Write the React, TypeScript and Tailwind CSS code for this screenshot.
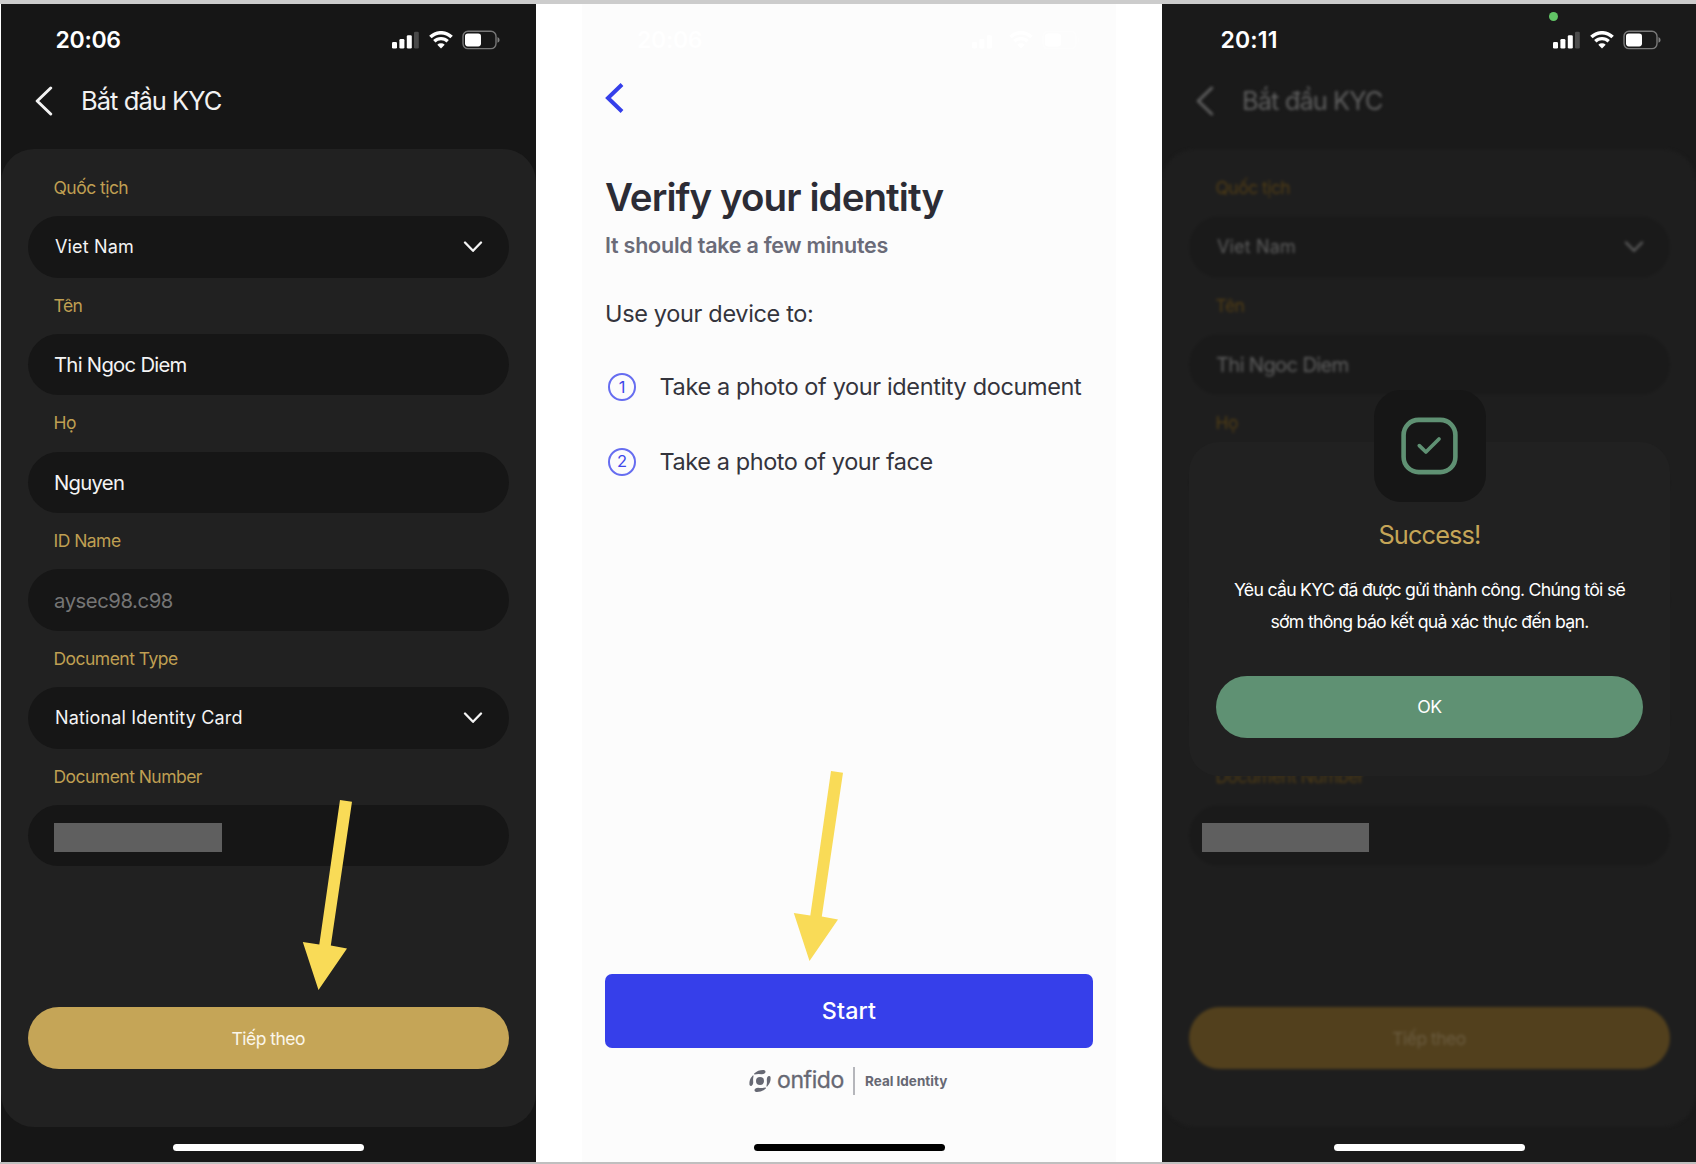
import React from "react";

function StatusBar({ time, timeClass, padClass }: { time: string; timeClass: string; padClass: string }) {
  return (
    <div className={`flex h-[72px] shrink-0 items-center text-white ${padClass}`}>
      <span className={`text-[23px] leading-none font-semibold ${timeClass}`}>{time}</span>
      <svg className="ml-auto h-[18px] w-[27px]" viewBox="0 0 27 18" fill="currentColor">
        <rect x="0" y="11" width="5" height="6.5" rx="1.3" />
        <rect x="7.4" y="8" width="5" height="9.5" rx="1.3" />
        <rect x="14.8" y="4.3" width="5" height="13.2" rx="1.3" />
        <rect x="22" y="0.7" width="4.8" height="16.8" rx="1.3" opacity="0.22" />
      </svg>
      <svg className="ml-[10px] h-[18px] w-[24px]" viewBox="0 0 24 18" fill="none" stroke="currentColor">
        <path d="M1.4 6.1 A15 15 0 0 1 22.6 6.1" strokeWidth="3.5" />
        <path d="M5.3 10.3 A9.6 9.6 0 0 1 18.7 10.3" strokeWidth="3.3" />
        <path d="M8.3 13.8 A5.4 5.4 0 0 1 15.7 13.8 L12 17.6 Z" fill="currentColor" stroke="none" />
      </svg>
      <svg className="ml-[9px] h-[20px] w-[38px]" viewBox="0 0 38 20">
        <rect x="1" y="1.2" width="33" height="17.4" rx="5" fill="none" stroke="currentColor" strokeWidth="1.4" opacity="0.42" />
        <rect x="3" y="3.4" width="16" height="13" rx="2.8" fill="currentColor" />
        <path d="M35.5 7 Q37.6 8 37.6 9.9 Q37.6 11.8 35.5 12.8 Z" fill="currentColor" opacity="0.45" />
      </svg>
    </div>
  );
}

type Tone = {
  card: string;
  field: string;
  label: string;
  value: string;
  muted: string;
  button: string;
  title: string;
};

const brightTone: Tone = {
  card: "bg-[#212121] pl-[26.5px] pr-[27px]",
  field: "bg-[#161616] pl-[26.5px]",
  label: "text-[#bf9f52] pl-[26px]",
  value: "text-[#f4f4f4]",
  muted: "text-[#757575]",
  button: "bg-[#c5a557] text-[#fbf6ea]",
  title: "text-[#f2f2f2]",
};

const dimTone: Tone = {
  card: "bg-[#1e1e1e] px-[26.5px]",
  field: "bg-[#1a1a1a] pl-[27.5px]",
  label: "text-[#513d15] pl-[27px]",
  value: "text-[#5e5e5e]",
  muted: "text-[#303030]",
  button: "bg-[#52401d] text-[#6b5c40]",
  title: "text-[#5f5f5f]",
};

type Field = { label: string; value: string; kind: "select" | "input" | "muted" | "redacted" | "empty" };

const fields: Field[] = [
  { label: "Quốc tịch", value: "Viet Nam", kind: "select" },
  { label: "Tên", value: "Thi Ngoc Diem", kind: "input" },
  { label: "Họ", value: "Nguyen", kind: "input" },
  { label: "ID Name", value: "aysec98.c98", kind: "muted" },
  { label: "Document Type", value: "National Identity Card", kind: "select" },
  { label: "Document Number", value: "", kind: "redacted" },
];

// Rows behind the success dialog carry no content of their own.
const fieldsBehindDialog: Field[] = [
  fields[0],
  fields[1],
  { label: "Họ", value: "", kind: "empty" },
  { label: "", value: "", kind: "empty" },
  { label: "", value: "", kind: "empty" },
  { label: "Document Number", value: "", kind: "empty" },
];

function KycForm({ tone, rows }: { tone: Tone; rows: Field[] }) {
  return (
    <>
      <div className={`flex h-[48px] shrink-0 items-center pt-px pl-[34px] ${tone.title}`}>
        <svg className="h-[30px] w-[18px]" viewBox="0 0 18 30" fill="none" stroke="currentColor" strokeWidth="3" strokeLinecap="round" strokeLinejoin="round">
          <path d="M15.7 2 L2.2 15 L15.7 28" />
        </svg>
        <h1 className="ml-[28px] text-[25.5px] leading-none tracking-[-0.95px]">Bắt đầu KYC</h1>
      </div>
      <div className={`mt-[25px] flex h-[978px] shrink-0 flex-col rounded-[33px] pt-[10.75px] ${tone.card}`}>
        {rows.map((f, i) => (
          <div key={i}>
            <div className={`flex h-[56.25px] items-center text-[17.5px] tracking-[-0.53px] ${tone.label}`}>{f.label}</div>
            <div className={`flex h-[61.5px] items-center rounded-full pr-[26px] ${tone.field}`}>
              {f.kind === "select" && (
                <>
                  <span className={`pl-[1px] text-[18px] tracking-[0.15px] ${tone.value}`}>{f.value}</span>
                  <svg className={`ml-auto h-[12px] w-[20px] ${tone.value}`} viewBox="0 0 20 12" fill="none" stroke="currentColor" strokeWidth="2.3" strokeLinecap="round" strokeLinejoin="round">
                    <path d="M2 1.5 L10 9.8 L18 1.5" />
                  </svg>
                </>
              )}
              {f.kind === "input" && <span className={`pt-px text-[20.3px] tracking-[-0.72px] ${tone.value}`}>{f.value}</span>}
              {f.kind === "muted" && <span className={`pt-[2px] text-[20.3px] tracking-[-0.45px] ${tone.muted}`}>{f.value}</span>}
              {f.kind === "redacted" && <span className="mt-[3px] h-[29px] w-[168px] bg-[#5f5f5f]" />}
            </div>
          </div>
        ))}
        <div className={`mt-[140.8px] flex h-[62px] items-center justify-center rounded-full pt-[2px] text-[17.5px] tracking-[-0.5px] ${tone.button}`}>Tiếp theo</div>
      </div>
    </>
  );
}

function HomeBar({ color }: { color: string }) {
  return <div className={`mx-auto mt-auto mb-[11px] h-[7px] w-[191px] shrink-0 rounded-full ${color}`} />;
}

function Arrow({ place }: { place: string }) {
  return (
    <svg className={`absolute h-[192px] w-[52px] ${place}`} viewBox="0 0 52 192" fill="#f9db57">
      <path d="M38 0 L50 1.7 L28.8 145.6 L45 148.6 L16.5 190 L0.8 142 L17.3 144.4 Z" />
    </svg>
  );
}

function OnfidoMark() {
  return (
    <svg className="h-[24px] w-[24px]" viewBox="0 0 24 24" fill="currentColor">
      <circle cx="12" cy="12" r="4" />
      <path d="M6.2 4.4 Q10.5 0.6 16 1 Q18 1.6 17.4 3.4 Q16.6 5 14 5.2 Q9.5 4.6 6.6 5.4 Q5.6 5.2 6.2 4.4 Z" />
      <path d="M6.2 4.4 Q10.5 0.6 16 1 Q18 1.6 17.4 3.4 Q16.6 5 14 5.2 Q9.5 4.6 6.6 5.4 Q5.6 5.2 6.2 4.4 Z" transform="rotate(180 12 12)" />
      <path d="M6.6 4.8 Q10.5 1 15.6 1.4 Q17.4 1.8 16.9 3.4 Q16.2 5 14 5.2 Q9.5 4.8 6.9 5.5 Q6 5.4 6.6 4.8 Z" transform="translate(24 0) scale(-1 1) rotate(270 12 12)" />
      <path d="M6.6 4.8 Q10.5 1 15.6 1.4 Q17.4 1.8 16.9 3.4 Q16.2 5 14 5.2 Q9.5 4.8 6.9 5.5 Q6 5.4 6.6 4.8 Z" transform="translate(24 0) scale(-1 1) rotate(90 12 12)" />
    </svg>
  );
}

function Step({ n, text, textClass }: { n: number; text: string; textClass: string }) {
  return (
    <li className="flex h-[74.8px] items-center">
      <span className="ml-[3px] flex h-[28px] w-[28px] shrink-0 items-center justify-center rounded-full border-2 border-[#666df0] text-[16.5px] text-[#4048ea]">{n}</span>
      <span className={`ml-[23.5px] text-[23.5px] whitespace-nowrap text-[#34343c] ${textClass}`}>{text}</span>
    </li>
  );
}

export default function App() {
  return (
    <div className="flex h-[1164px] w-[1696px] flex-col overflow-hidden bg-white font-['Inter','Liberation_Sans',sans-serif]">
      <div className="h-[4px] shrink-0 bg-[#cccccc]" />
      <main className="flex h-[1158px] pl-px">
        <section className="relative flex w-[535px] shrink-0 flex-col bg-[#161616]">
          <StatusBar time="20:06" timeClass="pl-[54.5px] tracking-[-0.3px]" padClass="pr-[36px]" />
          <KycForm tone={brightTone} rows={fields} />
          <HomeBar color="bg-white" />
          <Arrow place="left-[301px] top-[796px]" />
        </section>

        <section className="relative ml-[46px] flex w-[534px] shrink-0 flex-col bg-[#fcfcfc]">
          <StatusBar time="20:06" timeClass="pl-[55px] tracking-[-0.3px]" padClass="pr-[36px]" />
          <svg className="mt-[6px] ml-[22px] h-[32px] w-[22px] shrink-0" viewBox="0 0 22 32" fill="none" stroke="#353fea" strokeWidth="4">
            <path d="M18 2.5 L4 16 L18 29.5" />
          </svg>
          <div className="flex grow flex-col px-[23px]">
            <h2 className="mt-[54.5px] text-[38.5px] leading-[56px] font-semibold tracking-[-0.93px] whitespace-nowrap text-[#2c2c35]">Verify your identity</h2>
            <p className="mt-[4px] text-[21.5px] leading-[32px] font-semibold tracking-[-0.23px] whitespace-nowrap text-[#6a6b78]">It should take a few minutes</p>
            <p className="mt-[37.5px] text-[23.5px] leading-[32px] tracking-[-0.34px] whitespace-nowrap text-[#34343c]">Use your device to:</p>
            <ol className="mt-[19.5px]">
              <Step n={1} text="Take a photo of your identity document" textClass="tracking-[-0.37px]" />
              <Step n={2} text="Take a photo of your face" textClass="tracking-[-0.42px]" />
            </ol>
            <button className="mt-[475.4px] h-[74px] shrink-0 rounded-[7px] bg-[#363fea] text-[23.3px] font-medium tracking-[0.15px] text-white">Start</button>
            <div className="mt-[18px] flex h-[30px] items-center pl-[143px] text-[#666873]">
              <OnfidoMark />
              <span className="ml-[5px] w-[67px] pb-[2px] text-[23px] leading-none tracking-[-0.4px] whitespace-nowrap [-webkit-text-stroke:0.3px_#666873]">onfido</span>
              <span className="ml-[9px] h-[28px] w-[2px] bg-[#b5b6bb]" />
              <span className="ml-[10px] text-[13.5px] font-bold whitespace-nowrap">Real Identity</span>
            </div>
          </div>
          <HomeBar color="bg-black" />
          <Arrow place="left-[211px] top-[767px]" />
        </section>

        <section className="relative ml-[46px] flex w-[534px] shrink-0 flex-col overflow-hidden bg-[#1a1a1a]">
          <StatusBar time="20:11" timeClass="pl-[58.5px] tracking-[0.15px]" padClass="pr-[35px]" />
          <div className="blur-[1.5px]">
            <KycForm tone={dimTone} rows={fieldsBehindDialog} />
          </div>
          <HomeBar color="bg-white" />
          <span className="absolute top-[8px] left-[386.5px] h-[9px] w-[9px] rounded-full bg-[#62c466]" />
          <span className="absolute top-[819px] left-[40px] h-[29px] w-[167px] bg-[#5f5f5f]" />

          <div className="absolute top-[438px] left-[27px] flex h-[333.5px] w-[481px] flex-col items-center rounded-[30px] bg-[#212121] px-[27px]">
            <div className="-mt-[52px] flex h-[112px] w-[112px] shrink-0 items-center justify-center rounded-[27px] bg-[#161616]">
              <svg className="h-[58px] w-[58px]" viewBox="0 0 58 58" fill="none" stroke="#5f9173" strokeLinecap="round" strokeLinejoin="round">
                <rect x="2.6" y="2.9" width="51.8" height="52.2" rx="15" strokeWidth="4.6" />
                <path d="M18.3 28.6 L24.9 35 L38 22" strokeWidth="3.7" />
              </svg>
            </div>
            <h2 className="mt-[17px] text-[25.3px] leading-[32px] tracking-[-0.85px] text-[#c5a557]">Success!</h2>
            <p className="mt-[23px] text-center text-[17.7px] leading-[32px] tracking-[-0.73px] whitespace-nowrap text-white">
              Yêu cầu KYC đã được gửi thành công. Chúng tôi sẽ
              <br />
              sớm thông báo kết quả xác thực đến bạn.
            </p>
            <button className="mt-[38px] h-[62px] w-full rounded-full bg-[#5f9173] text-[17.7px] tracking-[-0.5px] text-white">OK</button>
          </div>
        </section>
      </main>
      <div className="h-[2px] shrink-0 bg-[#bfbfbf]" />
    </div>
  );
}
